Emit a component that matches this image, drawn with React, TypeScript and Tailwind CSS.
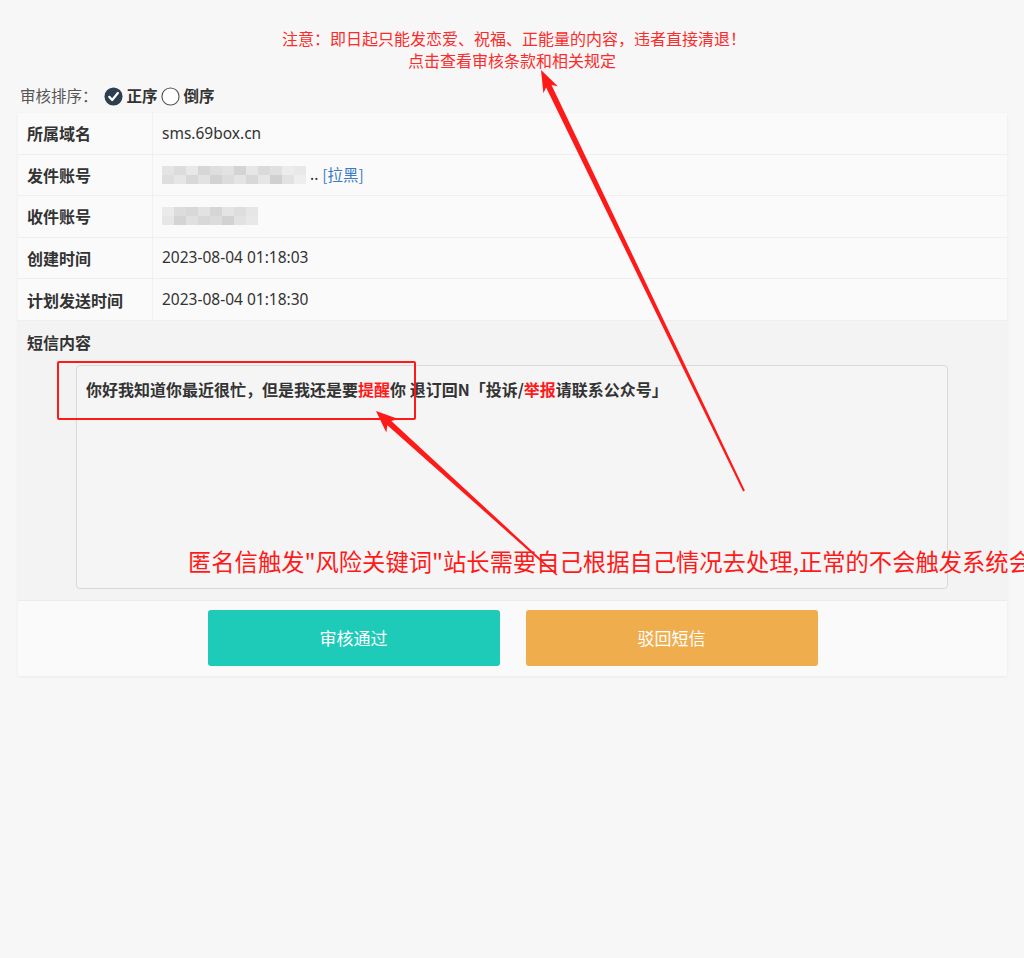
import React from 'react';

const cjk = { fontFamily: '"Microsoft YaHei", "Noto Sans CJK SC", "Noto Sans", sans-serif' };
const latin = { fontFamily: '"Noto Sans", "Noto Sans CJK SC", sans-serif' };

const senderBlur = [
  ['bg-[#e4e4e4]', 'bg-[#dcdcdc]', 'bg-[#e8e8e8]', 'bg-[#d6d6d6]', 'bg-[#dedede]', 'bg-[#e2e2e2]', 'bg-[#d4d4d4]', 'bg-[#e6e6e6]', 'bg-[#dadada]', 'bg-[#e0e0e0]', 'bg-[#ececec]', 'bg-[#e8e8e8]'],
  ['bg-[#dedede]', 'bg-[#e6e6e6]', 'bg-[#d8d8d8]', 'bg-[#e2e2e2]', 'bg-[#d2d2d2]', 'bg-[#dcdcdc]', 'bg-[#e4e4e4]', 'bg-[#d8d8d8]', 'bg-[#e6e6e6]', 'bg-[#d0d0d0]', 'bg-[#e2e2e2]', 'bg-[#eeeeee]'],
];

const receiverBlur = [
  ['bg-[#eaeaea]', 'bg-[#dcdcdc]', 'bg-[#d8d8d8]', 'bg-[#e2e2e2]', 'bg-[#d6d6d6]', 'bg-[#e4e4e4]', 'bg-[#dedede]', 'bg-[#e6e6e6]'],
  ['bg-[#e6e6e6]', 'bg-[#d4d4d4]', 'bg-[#e0e0e0]', 'bg-[#d8d8d8]', 'bg-[#dcdcdc]', 'bg-[#d2d2d2]', 'bg-[#e2e2e2]', 'bg-[#e8e8e8]'],
];

function Mosaic({ rows }: { rows: string[][] }) {
  return (
    <div className="flex flex-col">
      {rows.map((r, i) => (
        <div key={i} className="flex">
          {r.map((c, j) => (
            <div key={j} className={`w-[12px] h-[9px] ${c}`} />
          ))}
        </div>
      ))}
    </div>
  );
}

function Row({ label, children }: { label: string; children: React.ReactNode }) {
  return (
    <div className="flex h-[41.6px] border-b border-[#efefef]">
      <div className="w-[135px] shrink-0 flex items-center pl-[9px] border-r border-[#f0f0f0] text-[16px] font-bold text-[#333]" style={cjk}>
        {label}
      </div>
      <div className="flex items-center pl-[9px] text-[15.5px] text-[#333]" style={latin}>{children}</div>
    </div>
  );
}

function Arrows() {
  return (
    <svg className="absolute left-0 top-0 pointer-events-none" width="1024" height="958" viewBox="0 0 1024 958">
      <polygon
        fill="#ff1a1a"
        points="376,411 398.4,419.1 391.4,420.9 557.5,574.5 556.5,575.5 387.4,425.3 386.3,432.5"
      />
      <polygon
        fill="#ff1a1a"
        points="541,70 557.8,86.3 551.5,84.9 744.9,490.6 743.1,491.4 546.1,87.5 543.4,93.3"
      />
    </svg>
  );
}

export default function App() {
  return (
    <div className="relative w-[1024px] h-[958px] overflow-hidden bg-[#f7f7f7]" style={cjk}>
      <div className="pt-[27px] text-center text-[16px] leading-[22px] text-[#ff2a2a]">
        <p className="pl-[4px]">注意：即日起只能发恋爱、祝福、正能量的内容，违者直接清退！</p>
        <p>点击查看审核条款和相关规定</p>
      </div>

      <div className="flex items-center h-[26px] mt-[12px] mb-[4px] pl-[20px] text-[15.5px] text-[#555]">
        <span>审核排序：</span>
        <span className="ml-[6px] flex items-center gap-[4px] font-bold text-[#333]">
          <svg width="19" height="19" viewBox="0 0 20 20">
            <circle cx="10" cy="10" r="9.5" fill="#2d3e50" />
            <path d="M5.6 10.4 L8.6 13.6 L14.6 6.4" fill="none" stroke="#fff" strokeWidth="2.4" strokeLinecap="round" strokeLinejoin="round" />
          </svg>
          正序
        </span>
        <span className="ml-[3px] flex items-center gap-[4px] font-bold text-[#333]">
          <svg width="19" height="19" viewBox="0 0 20 20">
            <circle cx="10" cy="10" r="9" fill="#fff" stroke="#555" strokeWidth="1.2" />
          </svg>
          倒序
        </span>
      </div>

      <div className="mx-[18px] w-[989px] bg-[#fafafa] shadow-[0_1px_3px_rgba(0,0,0,0.06)]">
        <Row label="所属域名">
          <span>sms.69box.cn</span>
        </Row>
        <Row label="发件账号">
          <Mosaic rows={senderBlur} />
          <span className="ml-[4px]">..</span>
          <span className="ml-[4px] text-[#3a7bc0]" style={cjk}>[拉黑]</span>
        </Row>
        <Row label="收件账号">
          <Mosaic rows={receiverBlur} />
        </Row>
        <Row label="创建时间">
          <span>2023-08-04 01:18:03</span>
        </Row>
        <Row label="计划发送时间">
          <span>2023-08-04 01:18:30</span>
        </Row>

        <div className="bg-[#f3f3f3] pt-[10px] pb-[11px] border-b border-[#ececec]">
          <div className="pl-[9px] text-[16px] font-bold text-[#333] leading-[22px]">短信内容</div>
          <div className="ml-[58px] mt-[12px] w-[872px] h-[224px] rounded-[4px] border border-[#d9d9d9] bg-[#f5f5f5] px-[9px] py-[12px] text-[16px] font-bold text-[#333] leading-[22px]">
            你好我知道你最近很忙，但是我还是要<span className="text-[#ff1a1a]">提醒</span>你 退订回N「投诉/<span className="text-[#ff1a1a]">举报</span>请联系公众号」
          </div>
        </div>

        <div className="flex justify-center gap-[26px] pt-[9px] pb-[10px]">
          <button className="w-[292px] h-[56px] rounded-[3px] bg-[#1ecbb8] text-white text-[17px]">审核通过</button>
          <button className="w-[292px] h-[56px] rounded-[3px] bg-[#f0ad4e] text-white text-[17px]">驳回短信</button>
        </div>
      </div>

      {/* annotations drawn over the screenshot */}
      <div className="absolute left-[57px] top-[361px] w-[359px] h-[59px] border-2 border-[#ff1a1a] rounded-[2px]" />
      <div className="absolute left-[188px] top-[545px] whitespace-nowrap text-[23.3px] leading-[32px] text-[#ff1a1a]">
        匿名信触发"风险关键词"站长需要自己根据自己情况去处理,正常的不会触发系统会
      </div>
      <Arrows />
    </div>
  );
}
